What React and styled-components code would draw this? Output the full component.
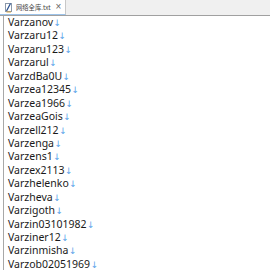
import styled, { createGlobalStyle } from "styled-components";

const Global = createGlobalStyle`
  html, body { margin: 0; padding: 0; background: #fff; }
  body { font-family: "Noto Sans", "Liberation Sans", sans-serif; }
`;

const Window = styled.div`
  width: 270px;
  height: 270px;
  overflow: hidden;
  display: flex;
  flex-direction: column;
  background: #fff;
`;

const TabBar = styled.div`
  height: 16px;
  background: #f0f0f0;
  border-bottom: 1px solid #a0a0a0;
  display: flex;
  align-items: flex-end;
  flex: none;
  box-sizing: border-box;
`;

const Tab = styled.div`
  height: 15px;
  width: 66px;
  flex: none;
  background: #fff;
  border-right: 1px solid #c8c8c8;
  border-bottom: 1px solid #9cc3ea;
  box-sizing: border-box;
  display: flex;
  align-items: center;
  gap: 3px;
  padding: 0 3px 0 4px;
  white-space: nowrap;
  font-size: 6.3px;
  color: #444;
  font-family: "Noto Sans CJK SC", "Noto Sans", sans-serif;

  svg { flex: none; }
`;

const TabTitle = styled.span`
  flex: 1;
  min-width: 0;
  overflow: hidden;
`;

const Close = styled.span`
  flex: none;
  width: 7px;
  font-family: "Liberation Sans", sans-serif;
  font-size: 10px;
  line-height: 10px;
  color: #666;
  text-align: center;
`;

const Editor = styled.div`
  flex: 1;
  display: flex;
  padding-left: 3px;
`;

const Lines = styled.div`
  flex: 1;
  border-left: 1px solid #a8a8a8;
  padding-left: 4px;
  font-size: 10.5px;
  color: #1a1a1a;
`;

const Line = styled.div`
  height: 13.45px;
  line-height: 13.45px;
  white-space: nowrap;
`;

const Eol = styled.span`
  color: #5ca4ea;
  font-size: 9px;
  line-height: 0;
  font-family: "DejaVu Sans", sans-serif;
  margin-left: 0.5px;
`;

function NoteIcon() {
  return (
    <svg width="9" height="11" viewBox="0 0 9 11">
      <rect x="1.5" y="1.5" width="6" height="8" fill="#fff" stroke="#8b98aa" />
      <path d="M2.5 9 L6.5 1.5" stroke="#2f5593" strokeWidth="1.3" />
      <path d="M2.5 10 H7" stroke="#d9a441" strokeWidth="1" />
    </svg>
  );
}

const words = [
  "Varzanov", "Varzaru12", "Varzaru123", "Varzarul", "VarzdBa0U",
  "Varzea12345", "Varzea1966", "VarzeaGois", "Varzell212", "Varzenga",
  "Varzens1", "Varzex2113", "Varzhelenko", "Varzheva", "Varzigoth",
  "Varzin03101982", "Varziner12", "Varzinmisha", "Varzob02051969",
];

export default function App() {
  return (
    <Window>
      <Global />
      <TabBar>
        <Tab>
          <NoteIcon />
          <TabTitle>网络全库.txt</TabTitle>
          <Close>×</Close>
        </Tab>
      </TabBar>
      <Editor>
        <Lines>
          {words.map((w) => (
            <Line key={w}>
              {w}
              <Eol>↓</Eol>
            </Line>
          ))}
        </Lines>
      </Editor>
    </Window>
  );
}
